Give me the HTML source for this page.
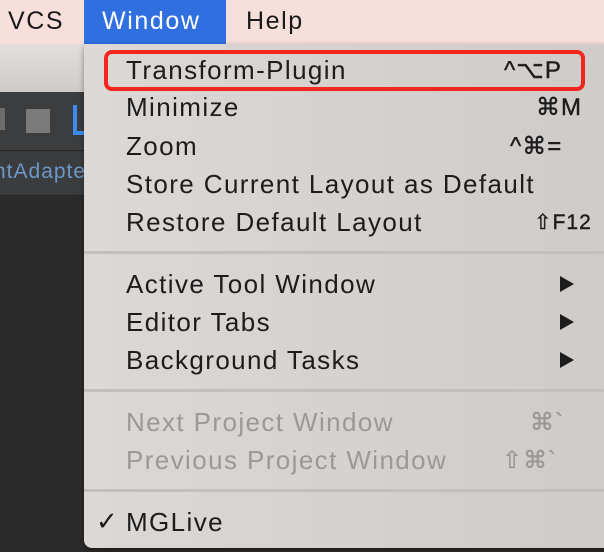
<!DOCTYPE html>
<html><head><meta charset="utf-8"><style>
*{margin:0;padding:0;box-sizing:border-box}
body{width:604px;height:552px;overflow:hidden;position:relative;background:#2b2b2b;font-family:"Liberation Sans","DejaVu Sans",sans-serif}
.bar{position:absolute;left:0;top:0;width:604px;height:44px;background:#f7dfdc;}
.bar span{position:absolute;top:7px;font-size:25px;color:#1a1a1a;letter-spacing:1.6px}
.win{position:absolute;left:84px;top:0;width:142px;height:44px;background:#2f6fe0}
.grey{position:absolute;left:0;top:44px;width:84px;height:48px;background:linear-gradient(#e2dedc,#cfcbc9)}
.tool{position:absolute;left:0;top:92px;width:84px;height:58px;background:#3b3d3f}
.row{position:absolute;left:0;top:150px;width:84px;height:46px;background:#3a3c3e;border-top:1px solid #262626;border-bottom:1px solid #262626}
.menu{position:absolute;left:84px;top:44px;width:530px;height:504px;background:linear-gradient(90deg,#dcd8d6,#cfcbc9);border-radius:0 0 0 8px;box-shadow:0 2px 6px rgba(0,0,0,.4)}
.it{position:absolute;left:42px;font-size:26px;letter-spacing:1.4px;color:#1c1c1c;white-space:nowrap}
.sc{position:absolute;font-size:24px;color:#1c1c1c;white-space:nowrap;letter-spacing:1px;-webkit-text-stroke:.4px #1c1c1c}
.dis{color:#9b9896}
.sc.dis{-webkit-text-stroke:.4px #9b9896}
.sep{position:absolute;left:0;width:520px;height:3px;background:#c3bfbd}
.arr{position:absolute;left:476px;width:0;height:0;border-left:14px solid #1c1c1c;border-top:8px solid transparent;border-bottom:8px solid transparent}
.red{position:absolute;left:104px;top:50px;width:481px;height:41px;border:4px solid #f2261d;border-radius:8px}
</style></head><body>
<div class="bar"><span style="left:8px">VCS</span><div class="win"></div><span style="left:102px;color:#fff">Window</span><span style="left:246px">Help</span></div>
<div class="grey"></div>
<div class="tool"><div style="position:absolute;left:0;top:16px;width:5px;height:22px;background:#6c6c6c"></div><div style="position:absolute;left:26px;top:17px;width:24px;height:24px;background:#7a7a7a"></div><div style="position:absolute;left:73px;top:13px;width:11px;height:30px;border-left:4px solid #3b8cf5;border-bottom:4px solid #3b8cf5"></div></div>
<div class="row"><span style="position:absolute;left:-6px;top:9px;font-size:21px;letter-spacing:1px;color:#6d97c9">ntAdapte</span></div>
<div class="menu">
<div class="it" style="top:11px">Transform-Plugin</div><div class="sc" style="top:12px;left:420px">^⌥P</div>
<div class="it" style="top:48px">Minimize</div><div class="sc" style="top:49px;left:452px">⌘M</div>
<div class="it" style="top:87px">Zoom</div><div class="sc" style="top:88px;left:426px">^⌘=</div>
<div class="it" style="top:125px">Store Current Layout as Default</div>
<div class="it" style="top:163px">Restore Default Layout</div><div class="sc" style="top:166px;left:450px;font-size:21px">⇧F12</div>
<div class="sep" style="top:207px"></div>
<div class="it" style="top:225px">Active Tool Window</div><div class="arr" style="top:232px"></div>
<div class="it" style="top:263px">Editor Tabs</div><div class="arr" style="top:270px"></div>
<div class="it" style="top:301px">Background Tasks</div><div class="arr" style="top:308px"></div>
<div class="sep" style="top:345px"></div>
<div class="it dis" style="top:363px">Next Project Window</div><div class="sc dis" style="top:364px;left:446px">⌘`</div>
<div class="it dis" style="top:401px">Previous Project Window</div><div class="sc dis" style="top:402px;left:418px">⇧⌘`</div>
<div class="sep" style="top:445px"></div>
<div class="it" style="top:462px;left:12px;font-weight:bold;letter-spacing:0">✓</div>
<div class="it" style="top:463px">MGLive</div>
</div>
<div class="red"></div>
</body></html>
